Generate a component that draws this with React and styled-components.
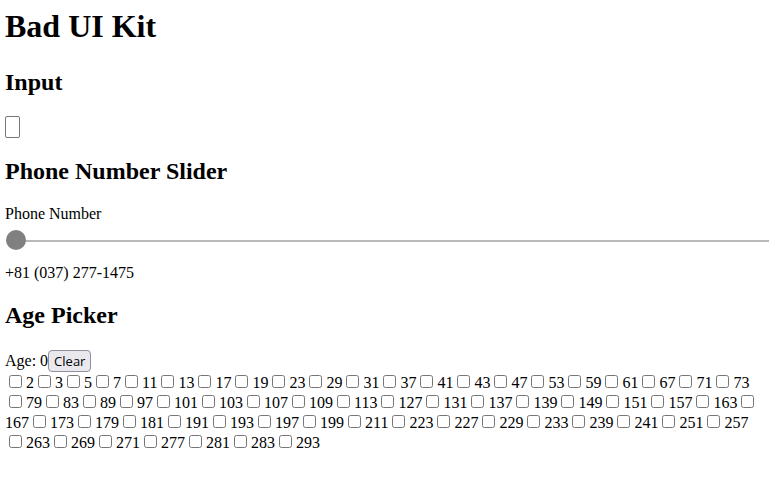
import React, { Fragment } from 'react';
import styled, { createGlobalStyle } from 'styled-components';

const primesUpTo = (max) => {
    const out = [];
    for (let n = 2; n <= max; n++) {
        let prime = true;
        for (let d = 2; d * d <= n; d++) {
            if (n % d === 0) {
                prime = false;
                break;
            }
        }
        if (prime) out.push(n);
    }
    return out;
};

const PRIMES = primesUpTo(293);

const App = () => {
    return (
        <>
            <GlobalStyle />
            <Page>
                <Title>Bad UI Kit</Title>

                <Heading>Input</Heading>
                <TinyInput type="text" aria-label="Input" />

                <Heading>Phone Number Slider</Heading>
                <FieldLabel htmlFor="phone">Phone Number</FieldLabel>
                <Range id="phone" type="range" min="0" max="100" defaultValue="0" />
                <Readout>+81 (037) 277-1475</Readout>

                <Heading>Age Picker</Heading>
                <AgeLine>
                    Age: 0<ClearButton type="button">Clear</ClearButton>
                </AgeLine>
                <Choices>
                    {PRIMES.map((p) => (
                        <Fragment key={p}>
                            <Check type="checkbox" />
                            {p}
                        </Fragment>
                    ))}
                </Choices>
            </Page>
        </>
    );
};

export default App;


const GlobalStyle = createGlobalStyle`
    html, body {
        margin: 0;
        background: #fff;
    }
    body {
        font-family: "Liberation Serif", "Times New Roman", serif;
        font-size: 16px;
        color: #000;
    }
`;

const Page = styled.div`
    padding: 8px 5px 20px;
`;

const Title = styled.h1`
    font-size: 32px;
    font-weight: 700;
    margin: 0 0 24px;
`;

const Heading = styled.h2`
    font-size: 24px;
    font-weight: 700;
    margin: 19.92px 0;
`;

const TinyInput = styled.input`
    display: block;
    box-sizing: border-box;
    width: 15px;
    height: 22px;
    margin: 0;
    padding: 0;
    border: 1px solid #767676;
    border-radius: 2px;
    background: #fff;
`;

const FieldLabel = styled.label`
    display: block;
`;

const Range = styled.input`
    display: block;
    -webkit-appearance: none;
    appearance: none;
    box-sizing: border-box;
    width: calc(100% - 1px);
    height: 20px;
    margin: 8px 0 13px 1px;
    padding: 0;
    background: transparent;

    &::-webkit-slider-runnable-track {
        height: 2px;
        background: #b9b9b9;
    }

    &::-webkit-slider-thumb {
        -webkit-appearance: none;
        appearance: none;
        width: 20px;
        height: 20px;
        margin-top: -10px;
        border: none;
        border-radius: 50%;
        background: #808080;
    }
`;

const Readout = styled.div``;

const AgeLine = styled.div`
    padding-top: 1px;
`;

const ClearButton = styled.button`
    font-family: "Open Sans", "Noto Sans", sans-serif;
    font-size: 13px;
    line-height: 18px;
    color: #000;
    padding: 1px 5px;
    margin: 0;
    border: 1px solid #8f8f9d;
    border-radius: 4px;
    background: #e9e9ed;
`;

const Choices = styled.div``;

const Check = styled.input`
    margin: 3px 4px 3px 4px;
`;
